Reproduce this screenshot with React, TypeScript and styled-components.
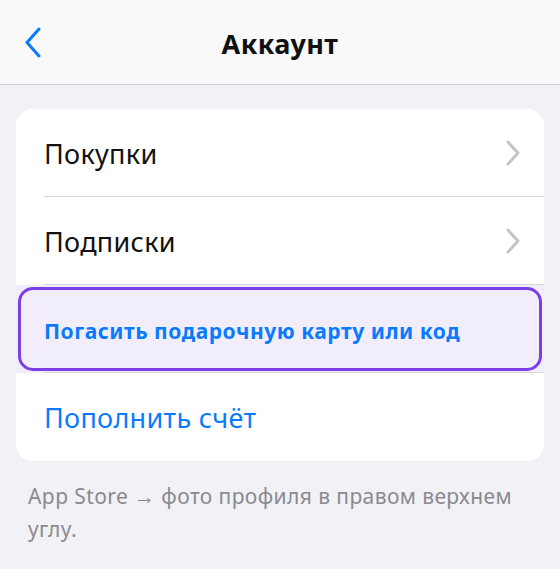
import React from "react";
import styled, { createGlobalStyle } from "styled-components";

const GlobalStyle = createGlobalStyle`
  html, body {
    margin: 0;
    padding: 0;
    background: #f2f1f6;
    font-family: "Noto Sans", "Open Sans", sans-serif;
    -webkit-font-smoothing: antialiased;
  }
  * { box-sizing: border-box; }
`;

const Page = styled.div`
  min-height: 569px;
  background: #f2f1f6;
`;

const NavBar = styled.header`
  height: 85px;
  background: #f9f9f9;
  border-bottom: 1px solid #d3d3d7;
  display: grid;
  grid-template-columns: 80px 1fr 80px;
  align-items: center;
`;

const BackButton = styled.button`
  border: 0;
  background: none;
  padding: 0 0 0 24px;
  display: flex;
  align-items: center;
  height: 100%;
  cursor: pointer;
`;

const Title = styled.h1`
  margin: 0;
  padding-top: 3px;
  text-align: center;
  font-size: 27px;
  font-weight: 700;
  color: #111;
  letter-spacing: 0.4px;
`;

const Content = styled.main`
  padding: 24px 16px 0;
`;

const Card = styled.div`
  background: #fff;
  border-radius: 17px;
  overflow: hidden;
`;

const Row = styled.div<{ $highlight?: boolean }>`
  position: relative;
  height: 88px;
  padding-left: 28px;
  background: ${(p) => (p.$highlight ? "#f1edfb" : "#fff")};
  ${(p) =>
    p.$highlight
      ? `&::after {
          content: "";
          position: absolute;
          left: 2px;
          right: 2px;
          top: 2px;
          bottom: 2px;
          border: 3px solid #7b3fe6;
          border-radius: 15px;
          pointer-events: none;
        }`
      : ""}
`;

const RowInner = styled.div<{ $last?: boolean }>`
  height: 100%;
  display: flex;
  align-items: center;
  justify-content: space-between;
  padding-right: 24px;
  border-bottom: ${(p) => (p.$last ? "none" : "1px solid #d6d6d9")};
`;

const Label = styled.span<{ $variant?: "plain" | "link" | "strong" }>`
  font-size: ${(p) => (p.$variant === "strong" ? "21px" : "27px")};
  font-weight: ${(p) => (p.$variant === "strong" ? 700 : 400)};
  color: ${(p) => (p.$variant === "plain" ? "#111" : "#0a7aff")};
  letter-spacing: ${(p) => (p.$variant === "strong" ? "0.55px" : "0.3px")};
  padding-top: ${(p) => (p.$variant === "strong" ? "4px" : "1px")};
`;

const Footer = styled.p`
  margin: 0;
  padding: 19px 28px 0;
  font-size: 21px;
  line-height: 33px;
  letter-spacing: 0.4px;
  color: #8a8a8f;
  max-width: 545px;
`;

const Chevron = () => (
  <svg width="14" height="26" viewBox="0 0 14 26" fill="none">
    <path d="M2 2 L12 13 L2 24" stroke="#c5c5c8" strokeWidth="3" strokeLinecap="round" strokeLinejoin="round" />
  </svg>
);

const BackIcon = () => (
  <svg width="18" height="31" viewBox="0 0 18 31" fill="none">
    <path d="M15 2 L3 15.5 L15 29" stroke="#0a7aff" strokeWidth="3" strokeLinecap="round" strokeLinejoin="round" />
  </svg>
);

export default function App() {
  return (
    <Page>
      <GlobalStyle />
      <NavBar>
        <BackButton aria-label="Назад">
          <BackIcon />
        </BackButton>
        <Title>Аккаунт</Title>
        <div />
      </NavBar>
      <Content>
        <Card>
          <Row>
            <RowInner>
              <Label $variant="plain">Покупки</Label>
              <Chevron />
            </RowInner>
          </Row>
          <Row>
            <RowInner>
              <Label $variant="plain">Подписки</Label>
              <Chevron />
            </RowInner>
          </Row>
          <Row $highlight>
            <RowInner>
              <Label $variant="strong">Погасить подарочную карту или код</Label>
            </RowInner>
          </Row>
          <Row>
            <RowInner $last>
              <Label $variant="link">Пополнить счёт</Label>
            </RowInner>
          </Row>
        </Card>
      </Content>
      <Footer>App Store → фото профиля в правом верхнем углу.</Footer>
    </Page>
  );
}
